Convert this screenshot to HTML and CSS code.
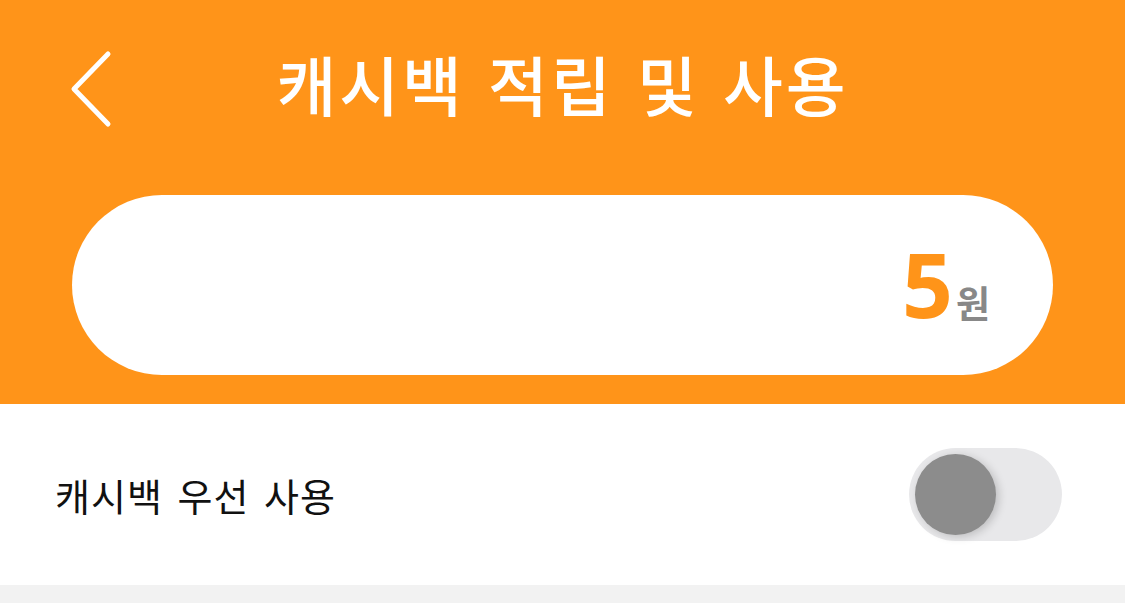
FILE: index.html
```html
<!DOCTYPE html>
<html lang="ko">
<head>
<meta charset="utf-8">
<link rel="stylesheet" href="styles.css">
</head>
<body>
<div class="top">
  <header class="header">
    <div class="back">
      <svg width="50" height="80" viewBox="0 0 50 80">
        <polyline points="38,5 4,40 38,75" fill="none" stroke="#fff" stroke-width="5" stroke-linecap="round" stroke-linejoin="round"/>
      </svg>
    </div>
    <h1 class="title">캐시백 적립 및 사용</h1>
    <div></div>
  </header>
  <div class="pill-wrap">
    <div class="pill">
      <span class="amount">5</span><span class="unit">원</span>
    </div>
  </div>
</div>
<div class="row">
  <span class="row-label">캐시백 우선 사용</span>
  <div class="toggle"><div class="knob"></div></div>
</div>
<div class="footer-gap"></div>
</body>
</html>
```
FILE: styles.css
```css
html, body {
  margin: 0;
  padding: 0;
  background: #fff;
  font-family: "Noto Sans CJK KR", "Noto Sans", sans-serif;
}
.top {
  background: #ff9419;
  padding-bottom: 29px;
}
.header {
  height: 170px;
  display: grid;
  grid-template-columns: 1fr auto 1fr;
  align-items: center;
}
.back {
  padding-left: 70px;
  display: flex;
  align-items: center;
  padding-top: 7px;
}
.back svg { display: block; }
.title {
  margin: 0;
  color: #fff;
  font-size: 65px;
  font-weight: 500;
  letter-spacing: 3px;
  word-spacing: 2px;
  line-height: 1;
  padding-bottom: 4px;
}
.pill-wrap {
  padding: 25px 72px 0;
}
.pill {
  height: 180px;
  background: #fff;
  border-radius: 90px;
  display: flex;
  justify-content: flex-end;
  align-items: baseline;
  padding: 0 63px;
  box-sizing: border-box;
  line-height: 1;
}
.amount {
  font-family: "Noto Sans", "Noto Sans CJK KR", sans-serif;
  color: #ff9419;
  font-weight: 700;
  font-size: 89px;
  padding-top: 44px;
  margin-right: 3px;
}
.unit {
  color: #888;
  font-weight: 700;
  font-size: 37px;
}
.row {
  height: 181px;
  display: flex;
  align-items: center;
  justify-content: space-between;
  padding: 0 63px 0 55px;
}
.row-label {
  font-size: 38px;
  color: #111;
  line-height: 1;
  word-spacing: 3px;
  letter-spacing: 1px;
}
.toggle {
  width: 153px;
  height: 93px;
  border-radius: 47px;
  background: #e8e8ea;
  display: flex;
  align-items: center;
  padding-left: 6px;
  box-sizing: border-box;
}
.knob {
  width: 81px;
  height: 81px;
  border-radius: 50%;
  background: #8c8c8c;
  box-shadow: 3px 2px 8px rgba(0,0,0,0.18);
}
.footer-gap {
  height: 18px;
  background: #f2f2f2;
}
```
